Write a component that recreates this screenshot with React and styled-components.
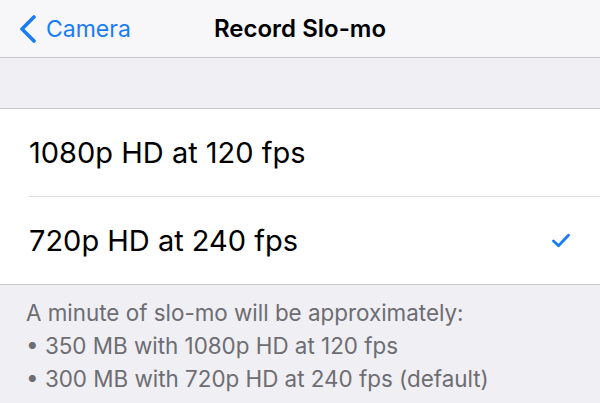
import React from "react";
import styled, { createGlobalStyle } from "styled-components";

const Global = createGlobalStyle`
  html, body { margin: 0; padding: 0; }
  body { background: #efeff4; font-family: Inter, "Noto Sans", sans-serif; -webkit-font-smoothing: antialiased; }
`;

const Page = styled.div`
  width: 600px;
  height: 403px;
  background: #efeff4;
  overflow: hidden;
  display: flex;
  flex-direction: column;
`;

const NavBar = styled.div`
  height: 58px;
  background: #f7f7f9;
  border-bottom: 1px solid #c8c7cc;
  box-sizing: border-box;
  display: grid;
  grid-template-columns: 1fr auto 1fr;
  align-items: center;
`;

const Back = styled.div`
  display: flex;
  align-items: center;
  gap: 9px;
  padding-left: 19px;
  color: #1a7cf5;
  font-size: 23px;
`;

const Title = styled.div`
  font-size: 24px;
  font-weight: 600;
  color: #000;
`;

const Spacer = styled.div`
  height: 50px;
  border-bottom: 1px solid #c8c7cc;
`;

const Group = styled.div`
  background: #fff;
  border-bottom: 1px solid #c8c7cc;
`;

const Row = styled.div`
  height: 87px;
  display: flex;
  align-items: center;
  justify-content: space-between;
  margin-left: 29px;
  padding-right: 30px;
  border-bottom: ${(p) => (p.last ? "none" : "1px solid #e0e0e4")};
  font-size: 29px;
  color: #000;
`;

const Footer = styled.div`
  padding: 11px 0 0 26px;
  color: #6d6d72;
  font-size: 22.4px;
  line-height: 33px;
`;

const Chevron = () => (
  <svg width="18" height="28" viewBox="0 0 18 28">
    <path d="M15 2 L3 14 L15 26" fill="none" stroke="#1a7cf5" strokeWidth="3.6" strokeLinecap="round" strokeLinejoin="round" />
  </svg>
);

const Check = () => (
  <svg width="18" height="15" viewBox="0 0 18 15">
    <path d="M1.5 8 L6.5 12.8 L16.5 2.2" fill="none" stroke="#1a7cf5" strokeWidth="2.8" strokeLinecap="round" strokeLinejoin="round" />
  </svg>
);

export default function App() {
  return (
    <Page>
      <Global />
      <NavBar>
        <Back>
          <Chevron />
          <span>Camera</span>
        </Back>
        <Title>Record Slo-mo</Title>
        <div />
      </NavBar>
      <Spacer />
      <Group>
        <Row>
          <span>1080p HD at 120 fps</span>
        </Row>
        <Row last>
          <span>720p HD at 240 fps</span>
          <Check />
        </Row>
      </Group>
      <Footer>
        <div>A minute of slo-mo will be approximately:</div>
        <div>• 350 MB with 1080p HD at 120 fps</div>
        <div>• 300 MB with 720p HD at 240 fps (default)</div>
      </Footer>
    </Page>
  );
}
